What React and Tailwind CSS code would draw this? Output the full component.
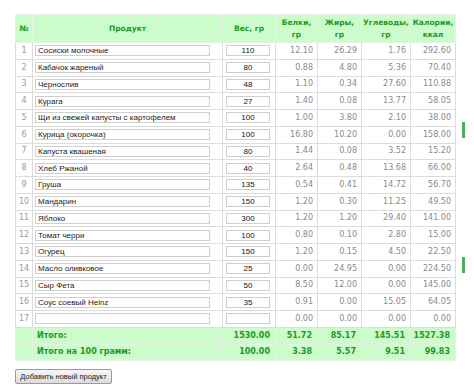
const rows = [
  ['Сосиски молочные', '110', '12.10', '26.29', '1.76', '292.60'],
  ['Кабачок жареный', '80', '0.88', '4.80', '5.36', '70.40'],
  ['Чернослив', '48', '1.10', '0.34', '27.60', '110.88'],
  ['Курага', '27', '1.40', '0.08', '13.77', '58.05'],
  ['Щи из свежей капусты с картофелем', '100', '1.00', '3.80', '2.10', '38.00'],
  ['Курица (окорочка)', '100', '16.80', '10.20', '0.00', '158.00'],
  ['Капуста квашеная', '80', '1.44', '0.08', '3.52', '15.20'],
  ['Хлеб Ржаной', '40', '2.64', '0.48', '13.68', '66.00'],
  ['Груша', '135', '0.54', '0.41', '14.72', '56.70'],
  ['Мандарин', '150', '1.20', '0.30', '11.25', '49.50'],
  ['Яблоко', '300', '1.20', '1.20', '29.40', '141.00'],
  [['Томат ', 'черри'], '100', '0.80', '0.10', '2.80', '15.00'],
  ['Огурец', '150', '1.20', '0.15', '4.50', '22.50'],
  ['Масло оливковое', '25', '0.00', '24.95', '0.00', '224.50'],
  [['Сыр ', 'Фета'], '50', '8.50', '12.00', '0.00', '145.00'],
  [['Соус соевый ', 'Heinz'], '35', '0.91', '0.00', '15.05', '64.05'],
  ['', '', '0.00', '0.00', '0.00', '0.00'],
];

const totals = [
  ['Итого:', '1530.00', '51.72', '85.17', '145.51', '1527.38'],
  ['Итого на 100 грамм:', '100.00', '3.38', '5.57', '9.51', '99.83'],
];

const cell = 'border border-[#dcdcdc] p-0';
const num = 'text-right pr-[4px] text-[#8a8a8a] text-[8px]';

const ProductName = ({ name }) => {
  if (Array.isArray(name)) {
    return (
      <>
        {name[0]}
        <span className="underline decoration-wavy decoration-[#e05050] decoration-1">{name[1]}</span>
      </>
    );
  }
  return name;
};

export default function App() {
  return (
    <div className="relative w-[474px] h-[386px] bg-white font-['DejaVu_Sans',sans-serif] overflow-hidden">
      <div className="pl-[15px] pt-[14px]">
        <table className="table-fixed border-collapse w-[440px]">
          <colgroup>
            <col className="w-[17px]" />
            <col className="w-[190px]" />
            <col className="w-[53px]" />
            <col className="w-[42px]" />
            <col className="w-[44px]" />
            <col className="w-[49px]" />
            <col className="w-[45px]" />
          </colgroup>
          <thead>
            <tr className="h-[28px] bg-[#ccfccc] text-[#229922] text-[7.5px] font-bold leading-[12px]">
              <th className="border border-[#e4f4e4] p-0">№</th>
              <th className="border border-[#e4f4e4] p-0">Продукт</th>
              <th className="border border-[#e4f4e4] p-0">Вес, гр</th>
              <th className="border border-[#e4f4e4] p-0">Белки,<br />гр</th>
              <th className="border border-[#e4f4e4] p-0">Жиры,<br />гр</th>
              <th className="border border-[#e4f4e4] p-0">Углеводы,<br />гр</th>
              <th className="border border-[#e4f4e4] p-0">Калории,<br />ккал</th>
            </tr>
          </thead>
          <tbody>
            {rows.map((r, i) => (
              <tr key={i} className="h-[16.75px]">
                <td className={`${cell} text-center text-[8px] text-[#999]`}>{i + 1}</td>
                <td className={`${cell} pl-[2px]`}>
                  <div className="w-[175px] h-[11px] border border-[#cfcfcf] bg-white pl-[2px] text-[8px] leading-[9px] text-[#222] font-['Liberation_Sans',sans-serif] whitespace-nowrap overflow-hidden">
                    <ProductName name={r[0]} />
                  </div>
                </td>
                <td className={`${cell} pl-[3px]`}>
                  <div className="w-[44px] h-[11px] border border-[#cfcfcf] bg-white text-center text-[8px] leading-[9px] text-[#111] font-['Liberation_Sans',sans-serif]">
                    {r[1]}
                  </div>
                </td>
                <td className={`${cell} ${num}`}>{r[2]}</td>
                <td className={`${cell} ${num}`}>{r[3]}</td>
                <td className={`${cell} ${num}`}>{r[4]}</td>
                <td className={`${cell} ${num}`}>{r[5]}</td>
              </tr>
            ))}
            {totals.map((t, i) => (
              <tr key={i} className="h-[16.75px] bg-[#ccfccc] text-[#229922] font-bold text-[8px]">
                <td className="border border-[#e4f4e4] p-0"></td>
                <td className="border border-[#e4f4e4] p-0 pl-[4px]">{t[0]}</td>
                {t.slice(1).map((v, j) => (
                  <td key={j} className="border border-[#e4f4e4] p-0 text-right pr-[5px]">{v}</td>
                ))}
              </tr>
            ))}
          </tbody>
        </table>
        <button className="mt-[8px] h-[15px] w-[97px] border border-[#9a9a9a] rounded-[2px] bg-gradient-to-b from-[#f7f7f7] to-[#dcdcdc] text-[7.5px] leading-[13px] text-[#222] font-['Liberation_Sans',sans-serif]">
          Добавить новый продукт
        </button>
      </div>
      <div className="absolute left-[462px] top-[122px] w-[3px] h-[16px] bg-[#4fae5a]" />
      <div className="absolute left-[462px] top-[257px] w-[3px] h-[16px] bg-[#4fae5a]" />
    </div>
  );
}
